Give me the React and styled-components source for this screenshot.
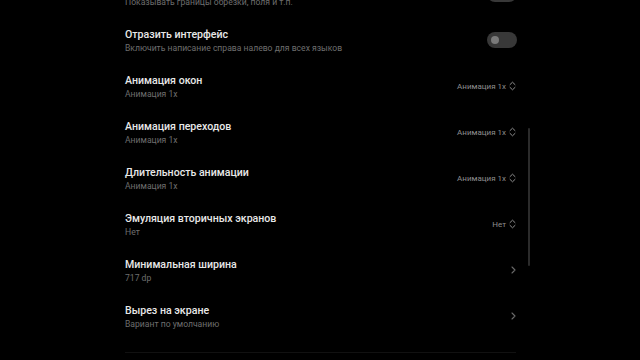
import React from "react";
import styled, { createGlobalStyle } from "styled-components";

const GlobalStyle = createGlobalStyle`
  html, body {
    margin: 0;
    padding: 0;
    background: #000;
    overflow: hidden;
  }
  body {
    font-family: Roboto, "Noto Sans", "Liberation Sans", sans-serif;
    -webkit-font-smoothing: antialiased;
  }
`;

const Screen = styled.div`
  width: 640px;
  height: 360px;
  background: #000;
  overflow: hidden;
  position: relative;
`;

const List = styled.div`
  margin-top: -29px;
  padding-left: 125px;
  width: 391px;
  display: flex;
  flex-direction: column;
`;

const Row = styled.div`
  height: 46px;
  display: flex;
  align-items: center;
  justify-content: space-between;
`;

const TextBlock = styled.div`
  display: flex;
  flex-direction: column;
`;

const Title = styled.div`
  font-size: 10.6px;
  line-height: 14px;
  font-weight: 500;
  color: #e8e8e8;
  padding-top: 1px;
`;

const Subtitle = styled.div`
  font-size: 8.6px;
  line-height: 12px;
  color: #6e6e6e;
`;

const Toggle = styled.div`
  width: 30px;
  height: 16px;
  border-radius: 8px;
  background: #383838;
  display: flex;
  align-items: center;
  padding-left: 4px;
  box-sizing: border-box;
  margin-right: -1px;
`;

const Knob = styled.div`
  width: 8px;
  height: 8px;
  border-radius: 50%;
  background: #7a7a7a;
`;

const Value = styled.div`
  display: flex;
  align-items: center;
  gap: 3px;
  font-size: 8px;
  color: #8e8e8e;
`;

const Divider = styled.div`
  margin-top: 13px;
  height: 1px;
  background: #111;
`;

const Scrollbar = styled.div`
  position: absolute;
  left: 528px;
  top: 128px;
  width: 2px;
  height: 138px;
  border-radius: 1px;
  background: #2b2b2b;
`;

const UpDown = () => (
  <svg width="7" height="10" viewBox="0 0 7 10" fill="none" stroke="#8e8e8e" strokeWidth="1" strokeLinecap="round" strokeLinejoin="round">
    <path d="M1 3.6 L3.5 1.2 L6 3.6" />
    <path d="M1 6.4 L3.5 8.8 L6 6.4" />
  </svg>
);

const Chevron = () => (
  <svg width="5" height="8" viewBox="0 0 5 8" fill="none" stroke="#6a6a6a" strokeWidth="1.1" strokeLinecap="round" strokeLinejoin="round">
    <path d="M1 1 L4 4 L1 7" />
  </svg>
);

const rows = [
  { title: "Показать границы элементов", sub: "Показывать границы обрезки, поля и т.п.", kind: "toggle" },
  { title: "Отразить интерфейс", sub: "Включить написание справа налево для всех языков", kind: "toggle" },
  { title: "Анимация окон", sub: "Анимация 1x", kind: "select", value: "Анимация 1x" },
  { title: "Анимация переходов", sub: "Анимация 1x", kind: "select", value: "Анимация 1x" },
  { title: "Длительность анимации", sub: "Анимация 1x", kind: "select", value: "Анимация 1x" },
  { title: "Эмуляция вторичных экранов", sub: "Нет", kind: "select", value: "Нет" },
  { title: "Минимальная ширина", sub: "717 dp", kind: "link" },
  { title: "Вырез на экране", sub: "Вариант по умолчанию", kind: "link" },
];

export default function App() {
  return (
    <Screen>
      <GlobalStyle />
      <List>
        {rows.map((r) => (
          <Row key={r.title}>
            <TextBlock>
              <Title>{r.title}</Title>
              <Subtitle>{r.sub}</Subtitle>
            </TextBlock>
            {r.kind === "toggle" && (
              <Toggle>
                <Knob />
              </Toggle>
            )}
            {r.kind === "select" && (
              <Value>
                {r.value}
                <UpDown />
              </Value>
            )}
            {r.kind === "link" && <Chevron />}
          </Row>
        ))}
        <Divider />
      </List>
      <Scrollbar />
    </Screen>
  );
}
